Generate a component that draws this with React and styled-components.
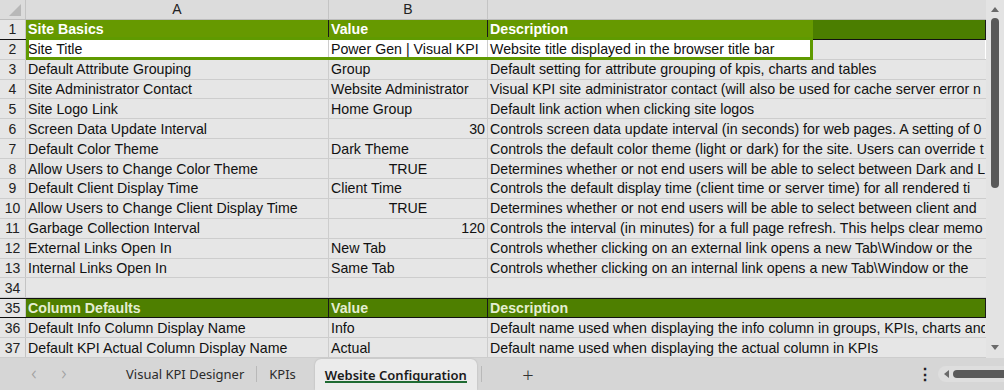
import React from "react";
import styled, { createGlobalStyle } from "styled-components";

const GlobalStyle = createGlobalStyle`
  html, body {
    margin: 0;
    padding: 0;
    background: #d6d6d6;
  }
  body {
    font-family: "Liberation Sans", Arial, sans-serif;
  }
`;

const COLS = "26px 303px 159px 1fr";

const Window = styled.div`
  width: 1004px;
  height: 390px;
  display: flex;
  flex-direction: column;
  overflow: hidden;
  background: #e6e6e6;
`;

const Sheet = styled.div`
  display: flex;
  height: 358px;
`;

const Grid = styled.div`
  flex: 1;
  min-width: 0;
  display: flex;
  flex-direction: column;
  overflow: hidden;
`;

const HeaderRow = styled.div`
  display: grid;
  grid-template-columns: ${COLS};
  height: 20px;
  background: #dcdcdc;
  border-bottom: 1px solid #bdbdbd;
  box-sizing: border-box;
`;

const Corner = styled.div`
  position: relative;
  border-right: 1px solid #c4c4c4;
  &::after {
    content: "";
    position: absolute;
    right: 4px;
    bottom: 3px;
    border-style: solid;
    border-width: 0 0 12px 12px;
    border-color: transparent transparent #b8b8b8 transparent;
  }
`;

const ColLabel = styled.div`
  display: flex;
  align-items: center;
  justify-content: center;
  font-size: 14px;
  color: #222;
  border-right: 1px solid ${(p) => (p.$last ? "transparent" : "#c4c4c4")};
`;

const Row = styled.div`
  position: relative;
  display: grid;
  grid-template-columns: ${COLS};
  height: 20px;
  box-sizing: border-box;
  border-bottom: 1px solid ${(p) => (p.$section ? "#111" : "#cdcdcd")};
  border-top: ${(p) => (p.$topLine ? "1px solid #111" : "0")};
`;

const RowNum = styled.div`
  display: flex;
  align-items: center;
  justify-content: center;
  font-size: 14px;
  color: #222;
  background: #e6e6e6;
  border-right: 1px solid #c4c4c4;
`;

const Cell = styled.div`
  display: flex;
  align-items: center;
  justify-content: ${(p) =>
    p.$align === "right" ? "flex-end" : p.$align === "center" ? "center" : "flex-start"};
  padding: 0 2px 0 2px;
  font-size: 14.2px;
  white-space: nowrap;
  overflow: hidden;
  color: #111;
  border-right: 1px solid ${(p) => (p.$noLine ? "transparent" : "#cdcdcd")};
  background: ${(p) =>
    p.$head === "light"
      ? "#669900"
      : p.$head === "dark"
      ? "#4e7f00"
      : p.$head === "split"
      ? "linear-gradient(to right, #669900 325px, #4b7e00 325px)"
      : p.$white
      ? "#ffffff"
      : "#e6e6e6"};
  ${(p) =>
    p.$head &&
    `
    font-weight: bold;
    color: ${p.$head === "dark" ? "#e4eed0" : "#ffffff"};
    border-right-color: #1a1a1a;
  `}
`;

const Selection = styled.div`
  position: absolute;
  left: 26px;
  top: -3px;
  width: 787px;
  height: 23px;
  box-sizing: border-box;
  border: 3px solid #5f9a00;
  pointer-events: none;
`;

const VScroll = styled.div`
  width: 18px;
  background: #e3e3e3;
  position: relative;
`;

const Arrow = styled.div`
  position: absolute;
  left: 5px;
  width: 0;
  height: 0;
  border-left: 4px solid transparent;
  border-right: 4px solid transparent;
  ${(p) =>
    p.$dir === "up"
      ? "top: 7px; border-bottom: 5px solid #6a6a6a;"
      : "bottom: 8px; border-top: 5px solid #6a6a6a;"}
`;

const Thumb = styled.div`
  position: absolute;
  left: 5px;
  top: 18px;
  width: 8px;
  height: 170px;
  border-radius: 4px;
  background: #595959;
`;

const TabBar = styled.div`
  height: 32px;
  display: flex;
  align-items: stretch;
  background: #d6d6d6;
  font-family: "Noto Sans", "Open Sans", sans-serif;
  font-size: 13px;
  color: #2b2b2b;
`;

const NavArrow = styled.div`
  width: 30px;
  display: flex;
  align-items: center;
  justify-content: center;
  color: #a0a0a0;
  font-size: 20px;
  font-weight: 300;
  padding-bottom: 3px;
`;

const Tab = styled.div`
  display: flex;
  align-items: center;
  padding: 0 12px;
  position: relative;
  ${(p) =>
    p.$active &&
    `
    background: #ebebeb;
    border-radius: 6px 6px 0 0;
    margin: 1px 0 0 7px;
    padding: 0 10px;
    font-weight: 600;
    color: #1a1a1a;
    box-shadow: 0 0 2px rgba(0,0,0,0.18);
    &::after {
      content: "";
      position: absolute;
      left: 10px;
      right: 10px;
      bottom: 7px;
      height: 2px;
      background: #1f6b33;
    }
  `}
`;

const Sep = styled.div`
  width: 1px;
  background: #b9b9b9;
  margin: 8px 0 8px ${(p) => p.$gap || 0}px;
`;

const AddTab = styled.div`
  width: 92px;
  display: flex;
  align-items: center;
  justify-content: center;
  font-size: 20px;
  font-weight: 300;
  color: #333;
`;

const Spacer = styled.div`
  flex: ${(p) => (p.$w ? `0 0 ${p.$w}px` : "1")};
`;

const More = styled.div`
  width: 26px;
  display: flex;
  align-items: center;
  justify-content: center;
  font-size: 16px;
  font-weight: bold;
  color: #222;
`;

const HScroll = styled.div`
  width: 60px;
  margin: 8px 0 8px 0;
  border-radius: 8px 0 0 8px;
  background: #dedede;
  display: flex;
  align-items: center;
  gap: 4px;
  padding-left: 6px;
`;

const HArrow = styled.div`
  width: 0;
  height: 0;
  border-top: 4px solid transparent;
  border-bottom: 4px solid transparent;
  border-right: 5px solid #6a6a6a;
`;

const HThumb = styled.div`
  flex: 1;
  height: 8px;
  border-radius: 4px 0 0 4px;
  background: #595959;
`;

const basics = [
  [3, "Default Attribute Grouping", "Group", "Default setting for attribute grouping of kpis, charts and tables"],
  [4, "Site Administrator Contact", "Website Administrator", "Visual KPI site administrator contact (will also be used for cache server error n"],
  [5, "Site Logo Link", "Home Group", "Default link action when clicking site logos"],
  [6, "Screen Data Update Interval", "30", "Controls screen data update interval (in seconds) for web pages.  A setting of 0", "right"],
  [7, "Default Color Theme", "Dark Theme", "Controls the default color theme (light or dark) for the site. Users can override t"],
  [8, "Allow Users to Change Color Theme", "TRUE", "Determines whether or not end users will be able to select between Dark and L", "center"],
  [9, "Default Client Display Time", "Client Time", "Controls the default display time (client time or server time) for all rendered ti"],
  [10, "Allow Users to Change Client Display Time", "TRUE", "Determines whether or not end users will be able to select between client and", "center"],
  [11, "Garbage Collection Interval", "120", "Controls the interval (in minutes) for a full page refresh. This helps clear memo", "right"],
  [12, "External Links Open In", "New Tab", "Controls whether clicking on an external link opens a new Tab\\Window or the"],
  [13, "Internal Links Open In", "Same Tab", "Controls whether clicking on an internal link opens a new Tab\\Window or the"],
];

const columns = [
  [36, "Default Info Column Display Name", "Info", "Default name used when displaying the info column in groups, KPIs, charts and"],
  [37, "Default KPI Actual Column Display Name", "Actual", "Default name used when displaying the actual column in KPIs"],
];

function DataRow({ n, a, b, c, align }) {
  return (
    <Row>
      <RowNum>{n}</RowNum>
      <Cell>{a}</Cell>
      <Cell $align={align}>{b}</Cell>
      <Cell $noLine>{c}</Cell>
    </Row>
  );
}

export default function App() {
  return (
    <Window>
      <GlobalStyle />
      <Sheet>
        <Grid>
          <HeaderRow>
            <Corner />
            <ColLabel>A</ColLabel>
            <ColLabel>B</ColLabel>
            <ColLabel $last />
          </HeaderRow>
          <Row $section>
            <RowNum>1</RowNum>
            <Cell $head="light">Site Basics</Cell>
            <Cell $head="light">Value</Cell>
            <Cell $head="split" $noLine>Description</Cell>
          </Row>
          <Row>
            <RowNum>2</RowNum>
            <Cell $white>Site Title</Cell>
            <Cell $white>Power Gen | Visual KPI</Cell>
            <Cell
              $noLine
              style={{ background: "linear-gradient(to right, #fff 322px, #e6e6e6 322px)" }}
            >
              Website title displayed in the browser title bar
            </Cell>
            <Selection />
          </Row>
          {basics.map(([n, a, b, c, align]) => (
            <DataRow key={n} n={n} a={a} b={b} c={c} align={align} />
          ))}
          <Row>
            <RowNum>34</RowNum>
            <Cell />
            <Cell />
            <Cell $noLine />
          </Row>
          <Row $section $topLine>
            <RowNum>35</RowNum>
            <Cell $head="dark">Column Defaults</Cell>
            <Cell $head="dark">Value</Cell>
            <Cell $head="dark" $noLine>Description</Cell>
          </Row>
          {columns.map(([n, a, b, c]) => (
            <DataRow key={n} n={n} a={a} b={b} c={c} />
          ))}
        </Grid>
        <VScroll>
          <Arrow $dir="up" />
          <Thumb />
          <Arrow $dir="down" />
        </VScroll>
      </Sheet>
      <TabBar>
        <Spacer $w={19} />
        <NavArrow>&lsaquo;</NavArrow>
        <NavArrow>&rsaquo;</NavArrow>
        <Spacer $w={35} />
        <Tab>Visual KPI Designer</Tab>
        <Sep />
        <Tab>KPIs</Tab>
        <Tab $active>Website Configuration</Tab>
        <Sep $gap={4} />
        <AddTab>+</AddTab>
        <Spacer />
        <More>⋮</More>
        <HScroll>
          <HArrow />
          <HThumb />
        </HScroll>
      </TabBar>
    </Window>
  );
}
